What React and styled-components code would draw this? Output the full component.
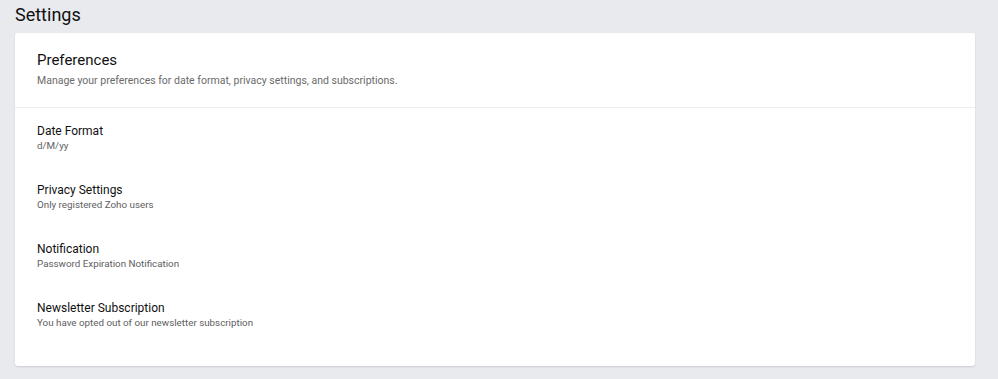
import styled, { createGlobalStyle } from 'styled-components';

const GlobalStyle = createGlobalStyle`
  body {
    margin: 0;
    background-color: #e9eaee;
    font-family: Roboto, "Liberation Sans", Arial, sans-serif;
    color: #111;
  }
`;

const Page = styled.div`
  display: flex;
  flex-direction: column;
  gap: 6px;
  padding: 3px 23px 13px 15px;
`;

const Title = styled.h1`
  margin: 0;
  font-size: 18px;
  font-weight: 400;
  line-height: 24px;
  color: #111;
`;

const Card = styled.section`
  background-color: #fff;
  border-radius: 3px;
  box-shadow: 0 1px 2px rgba(0, 0, 0, 0.12);
`;

const CardHeader = styled.header`
  display: flex;
  flex-direction: column;
  gap: 3px;
  padding: 17px 22px 18px;
  border-bottom: 1px solid #eceef1;
`;

const HeaderTitle = styled.h2`
  margin: 0;
  font-size: 15px;
  font-weight: 400;
  line-height: 20px;
  color: #111;
`;

const HeaderText = styled.p`
  margin: 0;
  font-size: 10.5px;
  line-height: 16px;
  color: #6a6a6a;
`;

const List = styled.div`
  display: flex;
  flex-direction: column;
  gap: 29px;
  padding: 15px 22px 36px;
`;

const Item = styled.div`
  display: flex;
  flex-direction: column;
`;

const ItemLabel = styled.span`
  font-size: 12px;
  line-height: 16px;
  color: #111;
`;

const ItemValue = styled.span`
  font-size: 9.8px;
  line-height: 14px;
  color: #606060;
`;

const preferences = [
  { label: 'Date Format', value: 'd/M/yy' },
  { label: 'Privacy Settings', value: 'Only registered Zoho users' },
  { label: 'Notification', value: 'Password Expiration Notification' },
  { label: 'Newsletter Subscription', value: 'You have opted out of our newsletter subscription' },
];

function App() {
  return (
    <>
      <GlobalStyle />
      <Page>
        <Title>Settings</Title>
        <Card>
          <CardHeader>
            <HeaderTitle>Preferences</HeaderTitle>
            <HeaderText>
              Manage your preferences for date format, privacy settings, and subscriptions.
            </HeaderText>
          </CardHeader>
          <List>
            {preferences.map(pref => (
              <Item key={pref.label}>
                <ItemLabel>{pref.label}</ItemLabel>
                <ItemValue>{pref.value}</ItemValue>
              </Item>
            ))}
          </List>
        </Card>
      </Page>
    </>
  );
}

export default App;
